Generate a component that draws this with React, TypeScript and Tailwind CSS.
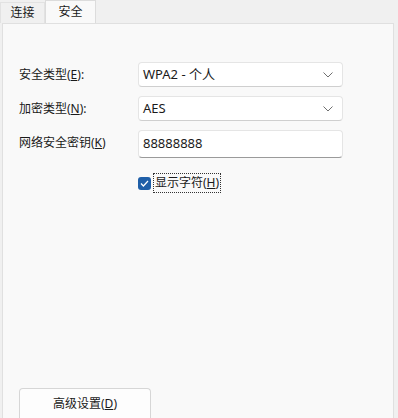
import React, { useState } from 'react';

const font = { fontFamily: '"Noto Sans", "Noto Sans CJK SC", sans-serif' };

function Chevron() {
  return (
    <svg width="10" height="6" viewBox="0 0 10 6" fill="none">
      <path d="M0.5 0.5 L5 5 L9.5 0.5" stroke="#6f6f6f" strokeWidth="1" />
    </svg>
  );
}

function Select({ value }: { value: string }) {
  return (
    <div className="flex h-[25px] w-[205px] items-center justify-between rounded-[4px] border border-[#e5e5e5] border-b-[#cfcfcf] bg-white pl-[4px] pr-[9px] text-[13px] text-[#1a1a1a]">
      <span>{value}</span>
      <Chevron />
    </div>
  );
}

export default function App() {
  const [show, setShow] = useState(true);

  return (
    <div className="flex h-[418px] w-[398px] flex-col overflow-hidden bg-[#f0f0f0] text-[#1a1a1a]" style={font}>
      <div className="flex h-[23px] items-end text-[12px]">
        <div className="flex h-[21px] w-[45px] items-center justify-center border border-b-0 border-[#e2e2e2] bg-[#f0f0f0]">连接</div>
        <div className="flex h-[23px] w-[51px] items-center justify-center border border-b-0 border-[#dcdcdc] bg-[#f9f9f9]">安全</div>
      </div>
      <div className="flex flex-1 pr-[4px]">
        <div className="ml-[2px] flex flex-1 flex-col border border-b-0 border-[#e0e0e0] bg-[#f9f9f9]">
          <div className="flex flex-col gap-[9px] pl-[16px] pt-[38px] text-[12px]">
            <div className="flex items-center">
              <span className="w-[119px]">安全类型(<u>E</u>):</span>
              <Select value="WPA2 - 个人" />
            </div>
            <div className="flex items-center">
              <span className="w-[119px]">加密类型(<u>N</u>):</span>
              <Select value="AES" />
            </div>
            <div className="flex items-start">
              <span className="mt-[4px] w-[119px]">网络安全密钥(<u>K</u>)</span>
              <div className="flex h-[28px] w-[205px] items-center rounded-[4px] border border-[#e5e5e5] border-b-[#9a9a9a] bg-white pl-[4px] text-[13px]">
                88888888
              </div>
            </div>
            <div className="mt-[6px] flex items-center pl-[119px]">
              <button
                onClick={() => setShow(!show)}
                className="flex h-[13px] w-[13px] items-center justify-center rounded-[3px] bg-[#1f5fa8]"
              >
                {show && (
                  <svg width="9" height="7" viewBox="0 0 9 7" fill="none">
                    <path d="M1 3.5 L3.4 6 L8 1" stroke="white" strokeWidth="1.2" />
                  </svg>
                )}
              </button>
              <span className="ml-[2px] border border-dotted border-[#333] px-[1px] leading-[18px]">显示字符(<u>H</u>)</span>
            </div>
          </div>
          <div className="mt-auto pl-[16px]">
            <button className="h-[30px] w-[132px] rounded-t-[4px] border border-b-0 border-[#d6d6d6] bg-[#fdfdfd] text-[12px]">
              高级设置(<u>D</u>)
            </button>
          </div>
        </div>
      </div>
    </div>
  );
}
